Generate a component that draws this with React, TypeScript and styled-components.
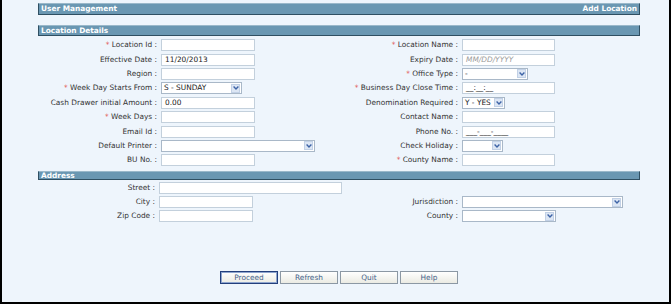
import React from "react";
import styled, { createGlobalStyle } from "styled-components";

const GlobalStyle = createGlobalStyle`
  html, body { margin: 0; padding: 0; background: #ffffff; }
  body { font-family: "DejaVu Sans", Verdana, sans-serif; }
  * { box-sizing: border-box; }
`;

const Page = styled.div`
  width: 671px;
  height: 304px;
  background: #eef5fc;
  border-left: 2px solid #000;
  border-right: 2px solid #000;
  border-bottom: 2px solid #000;
  padding: 3px 29px 0 36px;
  display: flex;
  flex-direction: column;
  font-size: 7.4px;
  color: #333;
`;

const TitleBar = styled.div`
  height: 12px;
  background: #6a97b2;
  border: 1px solid #2f4f62;
  border-top-color: #9ab8ca;
  color: #fff;
  font-weight: bold;
  display: flex;
  align-items: center;
  justify-content: space-between;
  padding: 0 2px;
  line-height: 10px;
`;

const SectionBar = styled.div<{ $thin?: boolean; $top: number }>`
  height: ${(p) => (p.$thin ? 9 : 11)}px;
  margin-top: ${(p) => p.$top}px;
  background: #6a97b2;
  border: 1px solid #2f4f62;
  border-top-color: #9ab8ca;
  color: #fff;
  font-weight: bold;
  display: flex;
  align-items: ${(p) => (p.$thin ? "flex-start" : "center")};
  padding: 0 2px;
  line-height: ${(p) => (p.$thin ? 7 : 9)}px;
`;

const FormGrid = styled.div<{ $cols: string; $top: number }>`
  display: grid;
  grid-template-columns: ${(p) => p.$cols};
  grid-auto-rows: 14.4px;
  padding-top: ${(p) => p.$top}px;
`;

const Label = styled.div`
  text-align: right;
  padding-right: 4px;
  white-space: nowrap;
  align-self: center;
  line-height: 12px;
  color: #333;
`;

const Req = styled.span`
  color: #e0453f;
`;

const TextBox = styled.div<{ $w: number; $placeholder?: boolean; $span?: number }>`
  width: ${(p) => p.$w}px;
  height: 12px;
  background: #fff;
  border: 1px solid #c3d0dc;
  justify-self: start;
  align-self: center;
  padding-left: 3px;
  line-height: 10px;
  white-space: nowrap;
  overflow: hidden;
  color: ${(p) => (p.$placeholder ? "#9a9a9a" : "#222")};
  font-style: ${(p) => (p.$placeholder ? "italic" : "normal")};
  ${(p) => (p.$span ? `grid-column: span ${p.$span};` : "")}
`;

const SelectBox = styled.div<{ $w: number }>`
  width: ${(p) => p.$w}px;
  height: 12px;
  background: #fff;
  border: 1px solid #a9b8c8;
  justify-self: start;
  align-self: center;
  display: flex;
  align-items: center;
  justify-content: space-between;
  padding-left: 2px;
  padding-right: 1px;
  line-height: 10px;
  color: #222;
  white-space: nowrap;
`;

const ArrowBox = styled.span`
  width: 9px;
  height: 9px;
  background: #dce6f4;
  border: 1px solid #c2d1e6;
  display: flex;
  align-items: center;
  justify-content: center;
`;

const Empty = styled.div``;

const ButtonRow = styled.div`
  margin-top: 47px;
  display: flex;
  justify-content: center;
  gap: 2px;
`;

const Button = styled.div<{ $primary?: boolean }>`
  width: 58px;
  height: 13px;
  border: 1px solid ${(p) => (p.$primary ? "#233f7c" : "#8c98a4")};
  box-shadow: ${(p) => (p.$primary ? "inset 0 0 0 1px #8fa6cf" : "none")};
  background: linear-gradient(#ffffff, #ebebe3);
  color: #44628a;
  display: flex;
  align-items: center;
  justify-content: center;
  line-height: 11px;
`;

const Chevron = () => (
  <svg width="6" height="4" viewBox="0 0 6 4">
    <path d="M0.6 0.6 L3 3 L5.4 0.6" fill="none" stroke="#3d63a6" strokeWidth="1.4" />
  </svg>
);

const Select = ({ w, value }: { w: number; value?: string }) => (
  <SelectBox $w={w}>
    <span>{value ?? ""}</span>
    <ArrowBox>
      <Chevron />
    </ArrowBox>
  </SelectBox>
);

const L = ({ text, req }: { text: string; req?: boolean }) => (
  <Label>
    {req && <Req>* </Req>}
    {text} :
  </Label>
);

export default function App() {
  return (
    <>
      <GlobalStyle />
      <Page>
        <TitleBar>
          <span>User Management</span>
          <span>Add Location</span>
        </TitleBar>
        <SectionBar $top={10}>Location Details</SectionBar>
        <FormGrid $cols="123px 158px 143px 1fr" $top={2}>
          <L text="Location Id" req />
          <TextBox $w={94} />
          <L text="Location Name" req />
          <TextBox $w={93} />

          <L text="Effective Date" />
          <TextBox $w={94}>11/20/2013</TextBox>
          <L text="Expiry Date" />
          <TextBox $w={93} $placeholder>
            MM/DD/YYYY
          </TextBox>

          <L text="Region" />
          <TextBox $w={94} />
          <L text="Office Type" req />
          <Select w={66} value="-" />

          <L text="Week Day Starts From" req />
          <Select w={81} value="S - SUNDAY" />
          <L text="Business Day Close Time" req />
          <TextBox $w={93}>__:__:__</TextBox>

          <L text="Cash Drawer initial Amount" />
          <TextBox $w={94}>0.00</TextBox>
          <L text="Denomination Required" />
          <Select w={43} value="Y - YES" />

          <L text="Week Days" req />
          <TextBox $w={94} />
          <L text="Contact Name" />
          <TextBox $w={93} />

          <L text="Email Id" />
          <TextBox $w={94} />
          <L text="Phone No." />
          <TextBox $w={93}>___-___-____</TextBox>

          <L text="Default Printer" />
          <Select w={154} />
          <L text="Check Holiday" />
          <Select w={41} />

          <L text="BU No." />
          <TextBox $w={94} />
          <L text="County Name" req />
          <TextBox $w={93} />
        </FormGrid>
        <SectionBar $thin $top={3}>
          Address
        </SectionBar>
        <FormGrid $cols="121px 160px 143px 1fr" $top={1}>
          <L text="Street" />
          <TextBox $w={183} $span={3} />

          <L text="City" />
          <TextBox $w={94} />
          <L text="Jurisdiction" />
          <Select w={161} />

          <L text="Zip Code" />
          <TextBox $w={94} />
          <L text="County" />
          <Select w={94} />
        </FormGrid>
        <Empty />
        <ButtonRow>
          <Button $primary>Proceed</Button>
          <Button>Refresh</Button>
          <Button>Quit</Button>
          <Button>Help</Button>
        </ButtonRow>
      </Page>
    </>
  );
}
